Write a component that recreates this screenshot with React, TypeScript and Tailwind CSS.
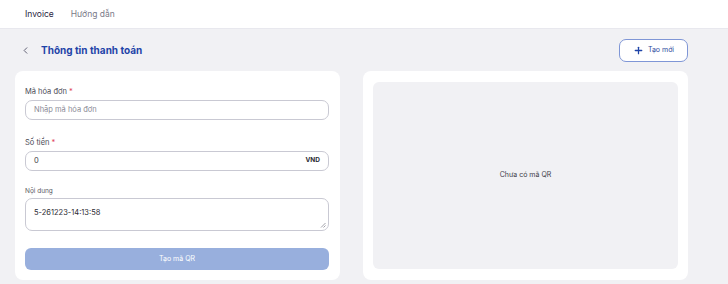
import { ChevronLeft, Plus } from "lucide-react";

export default function App() {
  return (
    <div className="w-[728px] h-[284px] overflow-hidden bg-[#f1f1f4] font-['Inter',sans-serif] text-[#2b2b33]">
      <header className="h-[29px] bg-white border-b border-[#e8e8ee] flex items-center pl-[25px] gap-[17px] text-[8.5px]">
        <span className="text-[#2a2540]">Invoice</span>
        <span className="text-[#7a7a88]">Hướng dẫn</span>
      </header>

      <main className="pl-[15px] pr-[40px]">
        <div className="h-[42px] flex items-center justify-between">
          <div className="flex items-center pl-[5px] gap-[10px]">
            <ChevronLeft size={11} strokeWidth={2} className="text-[#55556a]" />
            <h1 className="text-[10px] font-bold text-[#1f44a8]">Thông tin thanh toán</h1>
          </div>
          <button className="w-[69px] h-[23px] rounded-[7px] border border-[#7f96d6] bg-white flex items-center justify-center gap-[4px] text-[7px] text-[#2e4a9e]">
            <Plus size={11} strokeWidth={2.8} className="text-[#1f44a8]" />
            Tạo mới
          </button>
        </div>

        <div className="grid grid-cols-2 gap-[23px] h-[209px]">
          <section className="bg-white rounded-[8px] pt-[16px] pl-[10px] pr-[11px]">
            <label className="block text-[7.5px] text-[#4a4a55] leading-[10px]">
              Mã hóa đơn <span className="text-[#e0435a]">*</span>
            </label>
            <div className="mt-[3px] h-[20px] rounded-[7px] border border-[#c9c9d3] flex items-center px-[8px] text-[7.5px] text-[#8a8a96]">
              Nhập mã hóa đơn
            </div>

            <label className="block mt-[18px] text-[7.5px] text-[#4a4a55] leading-[10px]">
              Số tiền <span className="text-[#e0435a]">*</span>
            </label>
            <div className="mt-[3px] h-[20px] rounded-[7px] border border-[#c9c9d3] flex items-center justify-between px-[8px] text-[7.5px] text-[#3d3d48]">
              <span>0</span>
              <span className="font-bold text-[6.5px] text-[#2b2b33]">VND</span>
            </div>

            <label className="block mt-[16px] text-[6.5px] text-[#5a5a64] leading-[9px]">Nội dung</label>
            <div className="relative mt-[2px] h-[33px] rounded-[7px] border border-[#c9c9d3] px-[8px] pt-[8px] text-[7.5px] text-[#2b2b33]">
              5-261223-14:13:58
              <svg className="absolute right-[2px] bottom-[2px]" width="6" height="6" viewBox="0 0 6 6">
                <path d="M5.5 1 L1 5.5 M5.5 3.5 L3.5 5.5" stroke="#8a8a96" strokeWidth="0.8" />
              </svg>
            </div>

            <button className="mt-[17px] w-full h-[22px] rounded-[6px] bg-[#98afdd] text-white text-[7px]">
              Tạo mã QR
            </button>
          </section>

          <section className="bg-white rounded-[8px] p-[10px] pt-[11px] pb-[11px]">
            <div className="h-full rounded-[6px] bg-[#f1f1f4] flex items-center justify-center text-[7px] text-[#3d3d48]">
              Chưa có mã QR
            </div>
          </section>
        </div>
      </main>
    </div>
  );
}
